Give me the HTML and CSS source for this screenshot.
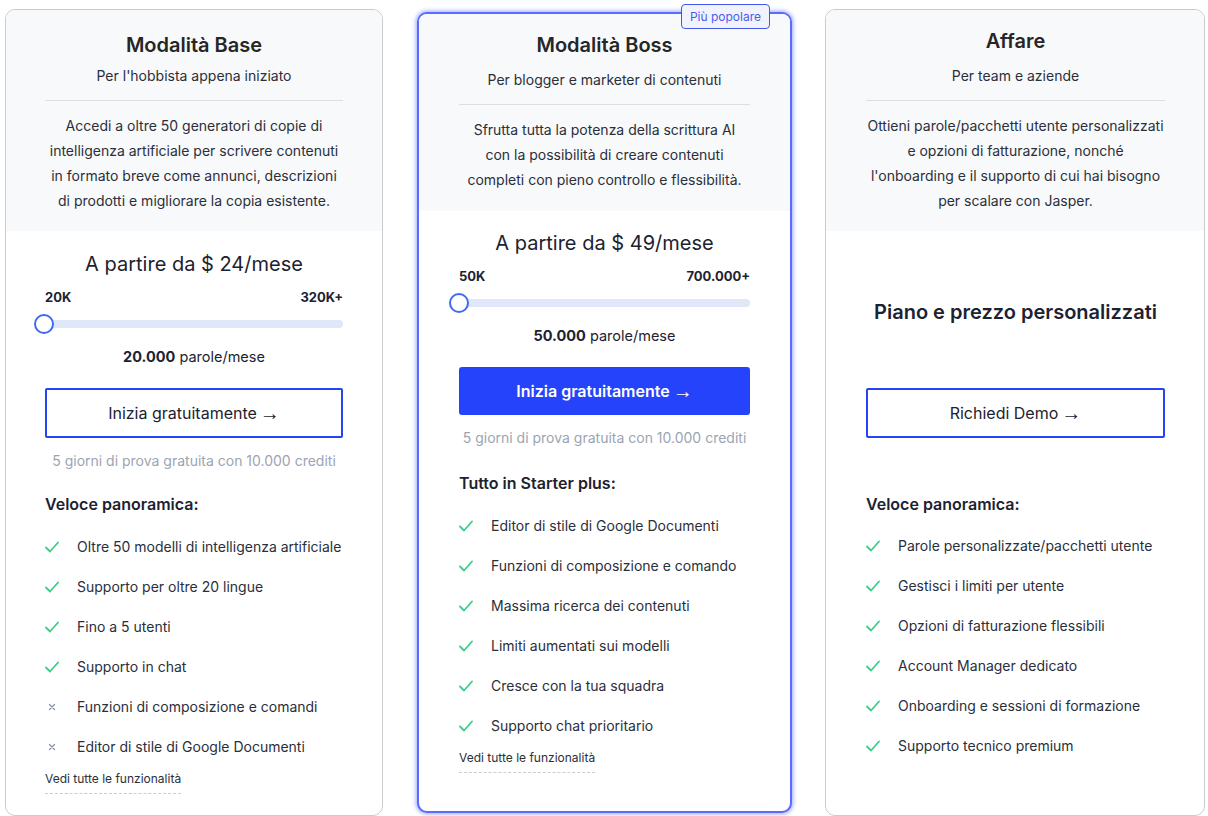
FILE: index.html
```html
<!DOCTYPE html>
<html lang="it">
<head>
<meta charset="utf-8">
<title>Prezzi</title>
<link rel="stylesheet" href="styles.css">
</head>
<body>
<div class="pricing">
  <!-- Card 1 -->
  <div class="card card-base">
    <div class="card-head">
      <h2 class="title">Modalità Base</h2>
      <p class="subtitle">Per l'hobbista appena iniziato</p>
      <hr class="divider">
      <p class="desc">Accedi a oltre 50 generatori di copie di intelligenza artificiale per scrivere contenuti in formato breve come annunci, descrizioni di prodotti e migliorare la copia esistente.</p>
    </div>
    <div class="card-body">
      <div class="price">A partire da $ 24/mese</div>
      <div class="range-labels"><span>20K</span><span>320K+</span></div>
      <div class="slider"><div class="track"></div><div class="thumb"></div></div>
      <div class="words"><b>20.000</b> parole/mese</div>
      <a class="btn btn-outline" href="#">Inizia gratuitamente <span class="arrow">→</span></a>
      <div class="trial">5 giorni di prova gratuita con 10.000 crediti</div>
      <h3 class="list-title">Veloce panoramica:</h3>
      <ul class="features">
        <li><span class="ic"><svg width="14" height="12" viewBox="0 0 14 12"><polyline points="1,6.5 5,10.5 13,1.5" fill="none" stroke="#3ccf8a" stroke-width="1.8" stroke-linecap="round" stroke-linejoin="round"/></svg></span>Oltre 50 modelli di intelligenza artificiale</li>
        <li><span class="ic"><svg width="14" height="12" viewBox="0 0 14 12"><polyline points="1,6.5 5,10.5 13,1.5" fill="none" stroke="#3ccf8a" stroke-width="1.8" stroke-linecap="round" stroke-linejoin="round"/></svg></span>Supporto per oltre 20 lingue</li>
        <li><span class="ic"><svg width="14" height="12" viewBox="0 0 14 12"><polyline points="1,6.5 5,10.5 13,1.5" fill="none" stroke="#3ccf8a" stroke-width="1.8" stroke-linecap="round" stroke-linejoin="round"/></svg></span>Fino a 5 utenti</li>
        <li><span class="ic"><svg width="14" height="12" viewBox="0 0 14 12"><polyline points="1,6.5 5,10.5 13,1.5" fill="none" stroke="#3ccf8a" stroke-width="1.8" stroke-linecap="round" stroke-linejoin="round"/></svg></span>Supporto in chat</li>
        <li><span class="ic"><svg width="14" height="12" viewBox="0 0 14 12"><path d="M4.5 3.5 L9.5 8.5 M9.5 3.5 L4.5 8.5" fill="none" stroke="#8a95ad" stroke-width="1.4" stroke-linecap="round"/></svg></span>Funzioni di composizione e comandi</li>
        <li><span class="ic"><svg width="14" height="12" viewBox="0 0 14 12"><path d="M4.5 3.5 L9.5 8.5 M9.5 3.5 L4.5 8.5" fill="none" stroke="#8a95ad" stroke-width="1.4" stroke-linecap="round"/></svg></span>Editor di stile di Google Documenti</li>
      </ul>
      <a class="more" href="#">Vedi tutte le funzionalità</a>
    </div>
  </div>

  <!-- Card 2 -->
  <div class="card card-boss">
    <span class="badge">Più popolare</span>
    <div class="card-head">
      <h2 class="title">Modalità Boss</h2>
      <p class="subtitle">Per blogger e marketer di contenuti</p>
      <hr class="divider">
      <p class="desc">Sfrutta tutta la potenza della scrittura AI con la possibilità di creare contenuti completi con pieno controllo e flessibilità.</p>
    </div>
    <div class="card-body">
      <div class="price">A partire da $ 49/mese</div>
      <div class="range-labels"><span>50K</span><span>700.000+</span></div>
      <div class="slider"><div class="track"></div><div class="thumb"></div></div>
      <div class="words"><b>50.000</b> parole/mese</div>
      <a class="btn btn-filled" href="#">Inizia gratuitamente <span class="arrow">→</span></a>
      <div class="trial">5 giorni di prova gratuita con 10.000 crediti</div>
      <h3 class="list-title">Tutto in Starter plus:</h3>
      <ul class="features">
        <li><span class="ic"><svg width="14" height="12" viewBox="0 0 14 12"><polyline points="1,6.5 5,10.5 13,1.5" fill="none" stroke="#3ccf8a" stroke-width="1.8" stroke-linecap="round" stroke-linejoin="round"/></svg></span>Editor di stile di Google Documenti</li>
        <li><span class="ic"><svg width="14" height="12" viewBox="0 0 14 12"><polyline points="1,6.5 5,10.5 13,1.5" fill="none" stroke="#3ccf8a" stroke-width="1.8" stroke-linecap="round" stroke-linejoin="round"/></svg></span>Funzioni di composizione e comando</li>
        <li><span class="ic"><svg width="14" height="12" viewBox="0 0 14 12"><polyline points="1,6.5 5,10.5 13,1.5" fill="none" stroke="#3ccf8a" stroke-width="1.8" stroke-linecap="round" stroke-linejoin="round"/></svg></span>Massima ricerca dei contenuti</li>
        <li><span class="ic"><svg width="14" height="12" viewBox="0 0 14 12"><polyline points="1,6.5 5,10.5 13,1.5" fill="none" stroke="#3ccf8a" stroke-width="1.8" stroke-linecap="round" stroke-linejoin="round"/></svg></span>Limiti aumentati sui modelli</li>
        <li><span class="ic"><svg width="14" height="12" viewBox="0 0 14 12"><polyline points="1,6.5 5,10.5 13,1.5" fill="none" stroke="#3ccf8a" stroke-width="1.8" stroke-linecap="round" stroke-linejoin="round"/></svg></span>Cresce con la tua squadra</li>
        <li><span class="ic"><svg width="14" height="12" viewBox="0 0 14 12"><polyline points="1,6.5 5,10.5 13,1.5" fill="none" stroke="#3ccf8a" stroke-width="1.8" stroke-linecap="round" stroke-linejoin="round"/></svg></span>Supporto chat prioritario</li>
      </ul>
      <a class="more" href="#">Vedi tutte le funzionalità</a>
    </div>
  </div>

  <!-- Card 3 -->
  <div class="card card-biz">
    <div class="card-head">
      <h2 class="title">Affare</h2>
      <p class="subtitle">Per team e aziende</p>
      <hr class="divider">
      <p class="desc">Ottieni parole/pacchetti utente personalizzati e opzioni di fatturazione, nonché l'onboarding e il supporto di cui hai bisogno per scalare con Jasper.</p>
    </div>
    <div class="card-body">
      <div class="custom">Piano e prezzo personalizzati</div>
      <a class="btn btn-outline" href="#">Richiedi Demo <span class="arrow">→</span></a>
      <h3 class="list-title">Veloce panoramica:</h3>
      <ul class="features">
        <li><span class="ic"><svg width="14" height="12" viewBox="0 0 14 12"><polyline points="1,6.5 5,10.5 13,1.5" fill="none" stroke="#3ccf8a" stroke-width="1.8" stroke-linecap="round" stroke-linejoin="round"/></svg></span>Parole personalizzate/pacchetti utente</li>
        <li><span class="ic"><svg width="14" height="12" viewBox="0 0 14 12"><polyline points="1,6.5 5,10.5 13,1.5" fill="none" stroke="#3ccf8a" stroke-width="1.8" stroke-linecap="round" stroke-linejoin="round"/></svg></span>Gestisci i limiti per utente</li>
        <li><span class="ic"><svg width="14" height="12" viewBox="0 0 14 12"><polyline points="1,6.5 5,10.5 13,1.5" fill="none" stroke="#3ccf8a" stroke-width="1.8" stroke-linecap="round" stroke-linejoin="round"/></svg></span>Opzioni di fatturazione flessibili</li>
        <li><span class="ic"><svg width="14" height="12" viewBox="0 0 14 12"><polyline points="1,6.5 5,10.5 13,1.5" fill="none" stroke="#3ccf8a" stroke-width="1.8" stroke-linecap="round" stroke-linejoin="round"/></svg></span>Account Manager dedicato</li>
        <li><span class="ic"><svg width="14" height="12" viewBox="0 0 14 12"><polyline points="1,6.5 5,10.5 13,1.5" fill="none" stroke="#3ccf8a" stroke-width="1.8" stroke-linecap="round" stroke-linejoin="round"/></svg></span>Onboarding e sessioni di formazione</li>
        <li><span class="ic"><svg width="14" height="12" viewBox="0 0 14 12"><polyline points="1,6.5 5,10.5 13,1.5" fill="none" stroke="#3ccf8a" stroke-width="1.8" stroke-linecap="round" stroke-linejoin="round"/></svg></span>Supporto tecnico premium</li>
      </ul>
    </div>
  </div>
</div>
</body>
</html>
```
FILE: styles.css
```css
* { box-sizing: border-box; }
html, body { margin: 0; padding: 0; background: #fff; }
body {
  font-family: Inter, "Noto Sans", "Liberation Sans", sans-serif;
  color: #1f2430;
}
.pricing {
  display: flex;
  align-items: center;
  gap: 34px;
  padding: 8px 0 0 5px;
  height: 816px;
  align-content: flex-start;
}
.card {
  position: relative;
  background: #fff;
  border: 1px solid #c9cbcf;
  border-radius: 10px;
  display: flex;
  flex-direction: column;
}
.card-base { width: 378px; height: 807px; }
.card-boss {
  width: 375px;
  height: 801px;
  border: 2px solid #5a6cfb;
  box-shadow: 0 0 4px 1px rgba(90, 108, 251, 0.6);
}
.card-biz { width: 380px; height: 807px; margin-left: -1px; }

.card-head {
  background: #f8f9fb;
  text-align: center;
  padding: 23px 39px 18px;
  border-radius: 9px 9px 0 0;
}
.card-boss .card-head { padding: 19px 40px 19px; border-radius: 8px 8px 0 0; }
.card-biz .card-head { padding: 19px 39px 18px 40px; }

.title {
  margin: 0;
  font-size: 20px;
  line-height: 24px;
  font-weight: 600;
  color: #262626;
}
.subtitle {
  margin: 9px 0 0;
  font-size: 14px;
  line-height: 20px;
  color: #2a2f3a;
}
.card-boss .subtitle, .card-biz .subtitle { margin-top: 13px; }
.divider {
  border: 0;
  border-top: 1px solid #dcdee3;
  margin: 14px 0 0;
  height: 0;
}
.desc {
  margin: 12px 0 0;
  font-size: 14px;
  line-height: 25px;
  color: #2a2f3a;
}
.card-boss .desc { padding: 0 6px; }

.card-body {
  padding: 0 39px;
  display: flex;
  flex-direction: column;
  flex: 1;
}
.card-boss .card-body { padding: 0 40px; }
.card-biz .card-body { padding: 0 39px 0 40px; }

.price {
  margin-top: 19px;
  text-align: center;
  font-size: 20px;
  line-height: 28px;
  color: #1d2230;
}
.card-boss .price { margin-top: 18px; }
.range-labels {
  margin-top: 10px;
  display: flex;
  justify-content: space-between;
  font-size: 13px;
  line-height: 18px;
  font-weight: 700;
  color: #1d2230;
}
.slider {
  position: relative;
  margin-top: 8px;
  height: 20px;
  display: flex;
  align-items: center;
}
.track {
  width: 100%;
  height: 8px;
  border-radius: 4px;
  background: #e0e7f8;
}
.thumb {
  position: absolute;
  left: -11px;
  top: 0;
  width: 20px;
  height: 20px;
  border-radius: 50%;
  background: #fff;
  border: 2.5px solid #3f6bf3;
}
.card-boss .thumb { left: -10px; }
.words {
  margin-top: 13px;
  text-align: center;
  font-size: 14.5px;
  line-height: 20px;
  color: #1d2230;
}
.words b { font-weight: 700; }

.btn {
  display: flex;
  align-items: center;
  justify-content: center;
  gap: 3px;
  margin-top: 21px;
  height: 50px;
  border-radius: 2px;
  font-size: 16px;
  text-decoration: none;
}
.arrow {
  font-family: "Liberation Sans", Arial, sans-serif;
  font-weight: 400;
  font-size: 20px;
  line-height: 1;
}
.btn-outline {
  border: 2px solid #2545f5;
  color: #1d2230;
  background: #fff;
}
.btn-filled {
  height: 48px;
  background: #2443fb;
  color: #fff;
  font-weight: 600;
  border-radius: 3px;
}
.trial {
  margin-top: 13px;
  text-align: center;
  font-size: 14px;
  line-height: 20px;
  color: #9ca4b4;
}
.list-title {
  margin: 22px 0 0;
  font-size: 16px;
  line-height: 22px;
  font-weight: 600;
  color: #1d2230;
}
.card-boss .list-title { margin-top: 24px; }
.features {
  list-style: none;
  margin: 12px 0 0;
  padding: 0;
}
.features li {
  display: flex;
  align-items: center;
  height: 40px;
  font-size: 14px;
  color: #2a2f3a;
}
.ic {
  width: 32px;
  flex: none;
  display: flex;
  align-items: center;
}
.more {
  align-self: flex-start;
  margin-top: 4px;
  font-size: 12px;
  line-height: 16px;
  color: #2a2f3a;
  text-decoration: none;
  padding-bottom: 6px;
  border-bottom: 1px dashed #c8ccd4;
}

.custom {
  margin-top: 69px;
  text-align: center;
  font-size: 20px;
  line-height: 24px;
  font-weight: 600;
  color: #1d2230;
}
.card-biz .btn { margin-top: 64px; }
.card-biz .list-title { margin-top: 55px; }
.card-biz .features { margin-top: 11px; }

.badge {
  position: absolute;
  top: -10px;
  right: 20px;
  padding: 0 8px;
  height: 25px;
  line-height: 23px;
  font-size: 12px;
  color: #4a5cf0;
  background: #f0f3fb;
  border: 1px solid #4456ea;
  border-radius: 4px;
}
```
